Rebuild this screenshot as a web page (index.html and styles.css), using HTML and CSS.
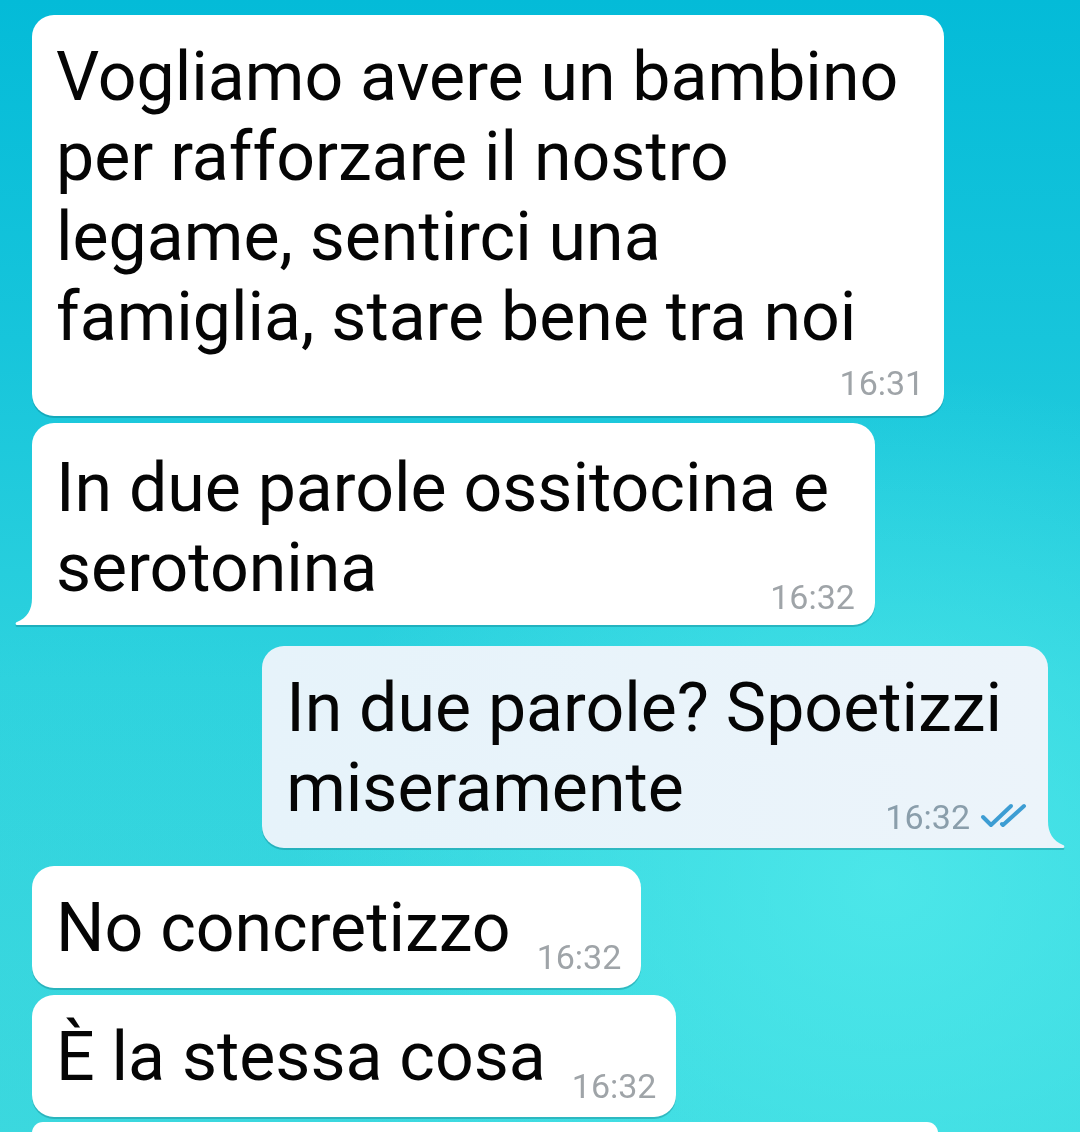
FILE: index.html
```html
<!DOCTYPE html>
<html lang="it">
<head>
<meta charset="utf-8">
<title>Chat</title>
<link rel="stylesheet" href="styles.css">
</head>
<body>
<main class="chat">
  <div class="bubble in">
    <p class="text">Vogliamo avere un bambino<br>per rafforzare il nostro<br>legame, sentirci una<br>famiglia, stare bene tra noi</p>
    <div class="time time--row">16:31</div>
  </div>
  <div class="bubble in tail-left b2">
    <p class="text">In due parole ossitocina e<br>serotonina<span class="time">16:32</span></p>
    <svg class="tail tail--left" width="18" height="27" viewBox="0 0 18 27"><path d="M18 0 L17 0 C17 12 12 20 2 24 C0 24.8 0.3 27 2.5 27 L18 27 Z" fill="#ffffff"/></svg>
  </div>
  <div class="bubble out tail-right group-start">
    <p class="text">In due parole? Spoetizzi<br>miseramente<span class="time time--out">16:32<svg class="checks" width="48" height="26" viewBox="0 0 48 26"><path d="M3 14 L11 22 L31 3" fill="none" stroke="#3d9dd3" stroke-width="4" stroke-linecap="round" stroke-linejoin="round"/><path d="M22 21 L23 22 L44 3" fill="none" stroke="#3d9dd3" stroke-width="4" stroke-linecap="round" stroke-linejoin="round"/></svg></span></p>
    <svg class="tail tail--right" width="18" height="27" viewBox="0 0 18 27"><path d="M0 0 L1 0 C1 12 6 20 16 24 C18 24.8 17.7 27 15.5 27 L0 27 Z" fill="#ebf4fa"/></svg>
  </div>
  <div class="bubble in group-start b4">
    <p class="text">No concretizzo<span class="time">16:32</span></p>
  </div>
  <div class="bubble in">
    <p class="text">È la stessa cosa<span class="time">16:32</span></p>
  </div>
  <div class="bubble in b6"></div>
</main>
</body>
</html>
```

FILE: styles.css
```css
* { box-sizing: border-box; }

html, body {
  margin: 0;
  padding: 0;
  width: 1080px;
  height: 1132px;
  overflow: hidden;
}

body {
  font-family: Roboto, "Noto Sans", "Liberation Sans", sans-serif;
  color: #050505;
  background:
    radial-gradient(ellipse 55% 45% at 82% 78%, rgba(84, 236, 236, 0.75), rgba(84, 236, 236, 0) 100%),
    radial-gradient(ellipse 60% 40% at 10% 95%, rgba(60, 214, 220, 0.5), rgba(60, 214, 220, 0) 100%),
    linear-gradient(180deg, #04bbd8 0%, #17c5db 30%, #2dd2de 60%, #3ad9e0 100%);
}

.chat {
  display: flex;
  flex-direction: column;
  align-items: flex-start;
  padding: 15px 32px 0;
}

.bubble {
  position: relative;
  background: #ffffff;
  border-radius: 22px;
  padding: 22px 46px 20px 24px;
  filter: drop-shadow(0 2px 0.5px rgba(0, 90, 105, 0.28));
  margin-top: 7px;
}

.bubble:first-child { margin-top: 0; }

.bubble.b2 { padding-top: 25px; padding-bottom: 17px; }

.bubble.group-start { margin-top: 21px; }
.bubble.b4 { margin-top: 18px; }
.bubble.b6 {
  margin-top: 5px;
  width: 906px;
  height: 11px;
  padding: 0;
  border-bottom-left-radius: 0;
  border-bottom-right-radius: 0;
}

.bubble.out {
  align-self: flex-end;
  background: linear-gradient(90deg, #e6f3fa 0%, #ecf4fa 100%);
}

.tail-left { border-bottom-left-radius: 0; }
.tail-right { border-bottom-right-radius: 0; }

.text {
  margin: 0;
  font-size: 68px;
  line-height: 80px;
  white-space: nowrap;
}

.time {
  float: right;
  height: 80px;
  padding-top: 52px;
  margin-left: 26px;
  margin-right: -26px;
  font-size: 34px;
  line-height: 34px;
  color: #9fa4a8;
  display: flex;
  align-items: flex-start;
}

.time--row {
  float: none;
  display: block;
  height: 39px;
  padding-top: 9px;
  margin: 0 -26px 0 0;
  text-align: right;
}

.time--out { color: #8a9eab; }

.checks {
  margin-left: 10px;
  margin-top: 3px;
}

.tail {
  position: absolute;
  bottom: 0;
  display: block;
}

.tail--left { left: -17px; }
.tail--right { right: -17px; }
```
